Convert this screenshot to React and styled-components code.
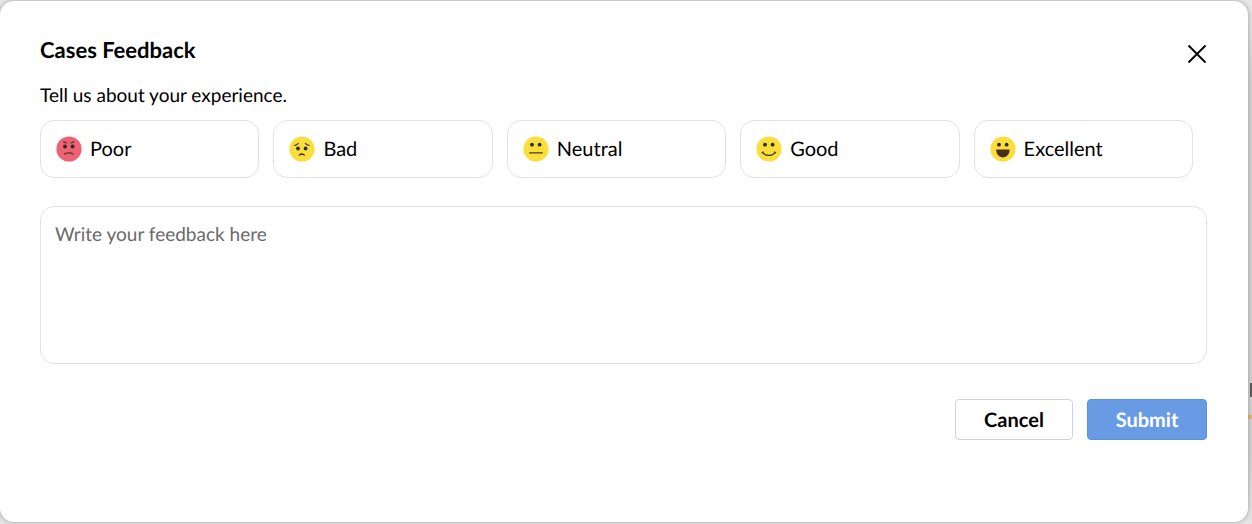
import { useState } from 'react'
import styled, { createGlobalStyle } from 'styled-components'

const ratings = [
  { id: 'poor', label: 'Poor' },
  { id: 'bad', label: 'Bad' },
  { id: 'neutral', label: 'Neutral' },
  { id: 'good', label: 'Good' },
  { id: 'excellent', label: 'Excellent' },
]

const eyeHeight = { poor: 10.5, bad: 12.5 }

const Face = ({ mood }) => {
  const eyeY = eyeHeight[mood] || 8.7

  return (
    <FaceIcon viewBox='0 0 26 26' aria-hidden='true' $angry={mood === 'poor'}>
      <circle className='skin' cx='13' cy='13' r='12.6' />
      <g className='eyes'>
        <circle cx='9' cy={eyeY} r='1.9' />
        <circle cx='16.6' cy={eyeY} r='1.9' />
      </g>
      {mood === 'poor' && (
        <g className='line'>
          <path d='M7.6 5.6 L10.6 7 M18 5.6 L15 7' />
          <path d='M8.6 18 C10.5 16.4 15.1 16.4 17 18' />
        </g>
      )}
      {mood === 'bad' && (
        <>
          <g className='line'>
            <path d='M5.6 9.4 C7 9.3 8.4 8.6 9.2 7.4 M20 9.4 C18.6 9.3 17.2 8.6 16.4 7.4' />
          </g>
          <path className='mouth' d='M9.4 20 C10 16.2 15.6 16.2 16.2 20 C14.2 18.8 11.4 18.8 9.4 20 Z' />
        </>
      )}
      {mood === 'neutral' && (
        <g className='line'>
          <path d='M6.6 16.9 H19.2' />
        </g>
      )}
      {mood === 'good' && (
        <g className='line'>
          <path d='M6.8 16.6 C9.4 20.4 16.4 20.4 19 16.6' />
          <path d='M6.2 16.8 L7.4 16 M19.6 16.8 L18.4 16' />
        </g>
      )}
      {mood === 'excellent' && (
        <path className='mouth' d='M6.2 13.6 H19.6 C19.6 24 6.2 24 6.2 13.6 Z' />
      )}
    </FaceIcon>
  )
}

export default function App() {
  const [rating, setRating] = useState('')
  const [feedback, setFeedback] = useState('')

  return (
    <>
      <GlobalStyle />
      <Backdrop>
        <PageText />
        <PageLine />
        <Modal role='dialog' aria-labelledby='feedback-title'>
          <Header>
            <Title id='feedback-title'>Cases Feedback</Title>
            <CloseButton type='button' aria-label='Close'>
              <svg width='20' height='20' viewBox='0 0 20 20' aria-hidden='true'>
                <path d='M1.5 1.5 L18.5 18.5 M18.5 1.5 L1.5 18.5' stroke='#000' strokeWidth='1.9' />
              </svg>
            </CloseButton>
          </Header>
          <form onSubmit={(e) => e.preventDefault()}>
            <Ratings>
              <Legend>Tell us about your experience.</Legend>
              <Options>
                {ratings.map(({ id, label }) => (
                  <Option key={id}>
                    <Radio
                      type='radio'
                      name='rating'
                      value={id}
                      checked={rating === id}
                      onChange={() => setRating(id)}
                    />
                    <Face mood={id} />
                    {label}
                  </Option>
                ))}
              </Options>
            </Ratings>
            <Feedback
              aria-label='Feedback'
              placeholder='Write your feedback here'
              value={feedback}
              onChange={(e) => setFeedback(e.target.value)}
            />
            <Actions>
              <Button type='button'>Cancel</Button>
              <Button type='submit' $primary>Submit</Button>
            </Actions>
          </form>
        </Modal>
      </Backdrop>
    </>
  )
}

const GlobalStyle = createGlobalStyle`
  * {
    box-sizing: border-box;
  }

  body {
    margin: 0;
    background: #d2d2d2;
    color: #000;
    font-family: Lato, 'Open Sans', sans-serif;
    font-size: 20px;
    line-height: 24px;
    text-rendering: geometricPrecision;
  }
`

const Backdrop = styled.div`
  position: relative;
  padding: 1px 4px 2px 0;
  background: linear-gradient(#e6e6e6, #d2d2d2 80px, #d2d2d2 450px, #e4e4e4);
`

/* bits of the page that show behind the dialog */
const PageText = styled.span`
  position: absolute;
  top: 383px;
  right: 0;
  width: 2px;
  height: 14px;
  background: #5c5c5c;
`

const PageLine = styled.span`
  position: absolute;
  top: 415px;
  right: 0;
  width: 4px;
  height: 4px;
  background: #dcb875;
`

const Modal = styled.section`
  position: relative;
  padding: 35px 41px 82px 40px;
  border-radius: 14px;
  background: #fff;
  box-shadow: 0 0 4px rgba(0, 0, 0, 0.3);
`

const Header = styled.header`
  display: flex;
  align-items: flex-start;
  justify-content: space-between;
`

const Title = styled.h1`
  margin: 0;
  font-size: 22px;
  font-weight: 700;
  line-height: 28px;
`

const CloseButton = styled.button`
  display: flex;
  margin-top: 8px;
  padding: 0;
  border: 0;
  background: none;
  cursor: pointer;
`

const Ratings = styled.fieldset`
  margin: 0;
  padding: 0;
  border: 0;
`

const Legend = styled.legend`
  padding: 20px 0 12px;
  font-size: 19px;
`

const Options = styled.div`
  display: grid;
  grid-template-columns: repeat(5, 1fr);
  gap: 14px;
  padding-right: 14px;
`

const Option = styled.label`
  display: flex;
  align-items: center;
  gap: 8px;
  height: 58px;
  padding: 0 15px;
  border: 1px solid #e2e2e2;
  border-radius: 14px;
  cursor: pointer;

  &:has(:checked) {
    border-color: #699be5;
  }
`

const Radio = styled.input`
  position: absolute;
  opacity: 0;
  pointer-events: none;
`

const FaceIcon = styled.svg`
  width: 26px;
  height: 26px;

  .skin {
    fill: ${({ $angry }) => ($angry ? '#ee6274' : '#fade3c')};
  }

  .eyes {
    fill: #2b2b2b;
  }

  .line {
    fill: none;
    stroke: #4b3a26;
    stroke-width: 1.2;
    stroke-linecap: round;
  }

  .mouth {
    fill: #4a2c1c;
  }
`

const Feedback = styled.textarea`
  display: block;
  width: 100%;
  height: 158px;
  margin-top: 28px;
  padding: 16px 14px;
  border: 1px solid #e2e2e2;
  border-radius: 14px;
  background: #fff;
  color: #000;
  font: inherit;
  font-size: 19px;
  text-rendering: inherit;
  resize: none;

  &::placeholder {
    color: #6a6a6a;
    opacity: 1;
  }
`

const Actions = styled.div`
  display: flex;
  justify-content: flex-end;
  gap: 14px;
  margin-top: 35px;
`

const Button = styled.button`
  min-width: ${({ $primary }) => ($primary ? '120px' : '118px')};
  height: 41px;
  padding: 0 24px;
  border: 1px solid ${({ $primary }) => ($primary ? '#5b90e0' : '#cfd4da')};
  border-radius: 4px;
  background: ${({ $primary }) => ($primary ? '#699be5' : '#fff')};
  color: ${({ $primary }) => ($primary ? '#fff' : '#000')};
  font: inherit;
  font-weight: 700;
  text-rendering: inherit;
  cursor: pointer;
`
